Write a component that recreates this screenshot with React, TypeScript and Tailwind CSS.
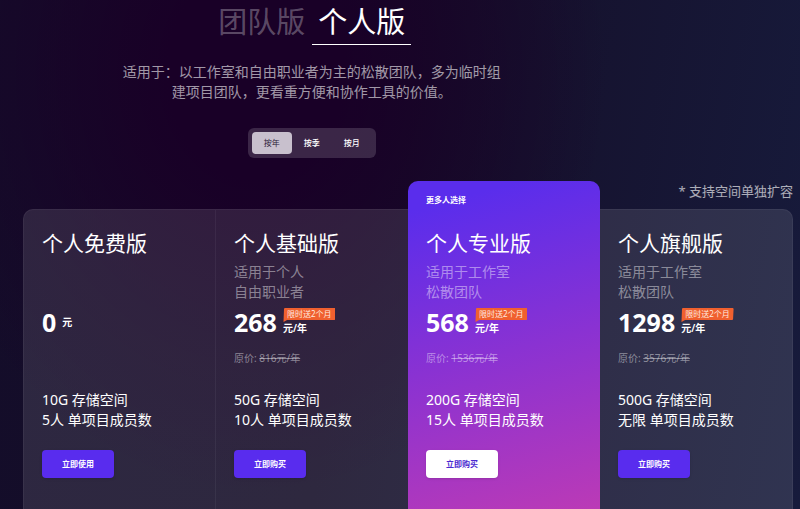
import { useState } from "react";

type Plan = {
  name: string;
  audience: string[];
  price: string;
  unit: string;
  original?: string;
  promo?: string;
  features: string[];
  action: string;
  featured?: boolean;
};

const plans: Plan[] = [
  {
    name: "个人免费版",
    audience: [],
    price: "0",
    unit: "元",
    features: ["10G 存储空间", "5人 单项目成员数"],
    action: "立即使用",
  },
  {
    name: "个人基础版",
    audience: ["适用于个人", "自由职业者"],
    price: "268",
    unit: "元/年",
    original: "816元/年",
    promo: "限时送2个月",
    features: ["50G 存储空间", "10人 单项目成员数"],
    action: "立即购买",
  },
  {
    name: "个人专业版",
    audience: ["适用于工作室", "松散团队"],
    price: "568",
    unit: "元/年",
    original: "1536元/年",
    promo: "限时送2个月",
    features: ["200G 存储空间", "15人 单项目成员数"],
    action: "立即购买",
    featured: true,
  },
  {
    name: "个人旗舰版",
    audience: ["适用于工作室", "松散团队"],
    price: "1298",
    unit: "元/年",
    original: "3576元/年",
    promo: "限时送2个月",
    features: ["500G 存储空间", "无限 单项目成员数"],
    action: "立即购买",
  },
];

const editions = ["团队版", "个人版"];
const periods = ["按年", "按季", "按月"];

function PromoBadge({ text }: { text: string }) {
  return (
    <span className="relative isolate block h-3 px-1 text-[8px] leading-3 font-normal whitespace-nowrap text-[#ffe9df]">
      <svg
        className="absolute inset-x-0 top-0 -z-10 h-[14px] w-full"
        viewBox="0 0 52 14"
        preserveAspectRatio="none"
        aria-hidden="true"
      >
        <path d="M2 0H51Q52 0 52 1L51.5 11Q51.5 12 50.5 12H4L0.5 14L1 1Q1 0 2 0Z" fill="#f0602f" />
      </svg>
      {text}
    </span>
  );
}

function PlanCard({ plan, divided }: { plan: Plan; divided: boolean }) {
  const shell = plan.featured
    ? "-mt-[29px] rounded-t-[10px] bg-[linear-gradient(165deg,#5a2dec_8%,#8a32d2_52%,#bb3ab6_100%)] pt-3"
    : "pt-5";
  return (
    <article className={`px-[18px] ${shell} ${divided ? "border-r border-white/5" : ""}`}>
      {plan.featured && (
        <p className="mb-6 h-[13px] text-[8px] leading-[13px] font-bold">更多人选择</p>
      )}
      <h2 className="text-[21px] leading-[26px]">{plan.name}</h2>
      <p className="mt-1.5 h-10 text-sm leading-5 text-white/45">
        {plan.audience.map((line) => (
          <span key={line} className="block">
            {line}
          </span>
        ))}
      </p>
      <div className="mt-1 flex h-8 items-center gap-1.5">
        <strong className="text-[25px] leading-8 font-bold">{plan.price}</strong>
        <div className="text-[10px] leading-4 font-semibold">
          {plan.promo && <PromoBadge text={plan.promo} />}
          <span className="block">{plan.unit}</span>
        </div>
      </div>
      <p className="mt-3 h-4 text-[10px] leading-4 text-white/45">
        {plan.original && (
          <>
            原价: <del>{plan.original}</del>
          </>
        )}
      </p>
      <ul className="mt-6 text-sm leading-5">
        {plan.features.map((feature) => (
          <li key={feature}>{feature}</li>
        ))}
      </ul>
      <button
        type="button"
        className={`mt-5 block h-7 w-[72px] rounded text-[8px] font-bold shadow-sm ${
          plan.featured ? "bg-white text-[#4a28d0]" : "bg-[#592cee] text-white"
        }`}
      >
        {plan.action}
      </button>
    </article>
  );
}

export default function App() {
  const [edition, setEdition] = useState("个人版");
  const [period, setPeriod] = useState("按年");

  return (
    <main className="flex h-screen min-h-[509px] flex-col overflow-hidden bg-[radial-gradient(ellipse_44%_84%_at_32%_14%,#190027_0%,#190027_25%,transparent_100%),linear-gradient(100deg,#140d2a_0%,#150e28_45%,#171b3c_100%)] pl-[23px] pr-[7px] font-['Noto_Sans','Noto_Sans_CJK_SC',sans-serif] text-white">
      <header className="flex w-3/4 flex-col items-center">
        <nav className="flex gap-px">
          {editions.map((name) => (
            <button
              key={name}
              type="button"
              onClick={() => setEdition(name)}
              className={`h-[45px] border-b px-1.5 text-[29px] leading-[44px] ${
                edition === name ? "border-white text-white" : "border-transparent text-white/30"
              }`}
            >
              {name}
            </button>
          ))}
        </nav>
        <p className="mt-[17px] w-96 text-center text-sm leading-5 text-white/60">
          适用于：以工作室和自由职业者为主的松散团队，多为临时组建项目团队，更看重方便和协作工具的价值。
        </p>
        <div className="mt-[26px] flex h-[30px] items-center rounded-md bg-white/15 px-1">
          {periods.map((name) => (
            <button
              key={name}
              type="button"
              onClick={() => setPeriod(name)}
              className={`h-[22px] w-10 rounded text-[8px] ${
                period === name ? "bg-[#c8c0cd] text-[#2a1a38]" : "font-medium text-white"
              }`}
            >
              {name}
            </button>
          ))}
        </div>
      </header>
      <p className="mt-[23px] text-right text-[13px] leading-5 text-white/65">* 支持空间单独扩容</p>
      <section className="mt-2 grid flex-1 grid-cols-4 rounded-t-[10px] border border-b-0 border-white/5 bg-white/11">
        {plans.map((plan, index) => (
          <PlanCard key={plan.name} plan={plan} divided={index === 0} />
        ))}
      </section>
    </main>
  );
}
